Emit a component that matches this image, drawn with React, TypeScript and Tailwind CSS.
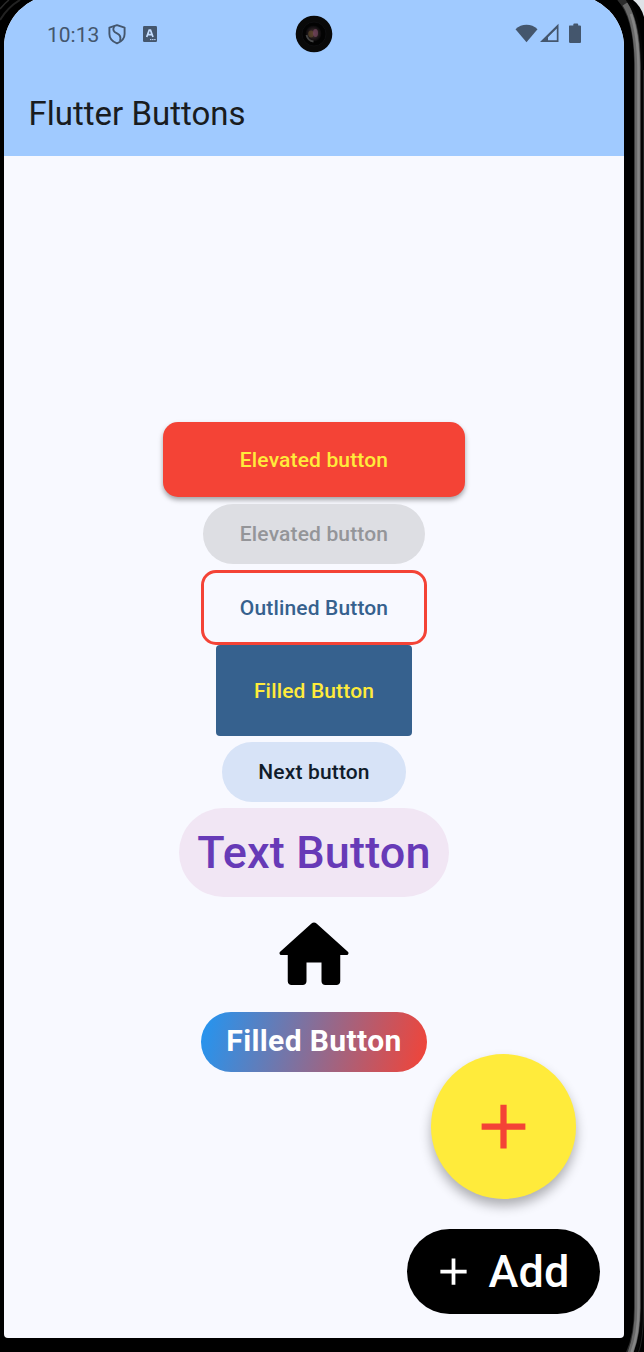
import React from "react";
import { MdAdd } from "react-icons/md";

function ShieldIcon() {
  return (
    <svg width="18" height="21" viewBox="0 0 18 21" fill="none" stroke="#44566d" strokeWidth="1.9" strokeLinejoin="round">
      <path d="M9 1.2 L16.6 3.6 V10 C16.6 14 13.5 17.6 9 19.4 C4.500 17.600 1.400 14 1.400 10 V3.600 Z" />
      <path d="M6.300 2.200 C4.400 6 5.500 7.800 9 9.400 C12.500 11 13.300 13 12 17" />
    </svg>
  );
}

function KeyboardIcon() {
  return (
    <svg width="14" height="16" viewBox="0 0 14 16">
      <rect width="14" height="16" rx="1.2" fill="#44566d" />
      <path d="M3.700 11 L6.200 4.200 H7.500 L10 11 M4.800 8.700 H8.900" fill="none" stroke="#c3dcfd" strokeWidth="1.700" />
      <path d="M7 13.600 H13" stroke="#c3dcfd" strokeWidth="1" strokeDasharray="1.400 .7" />
    </svg>
  );
}

function StatusIcons() {
  return (
    <svg width="68" height="22" viewBox="0 0 68 22" fill="#44566d">
      <path d="M0.500 6.200 C6.500 .300 16.500 .300 22.500 6.200 L11.500 19.300 Z" />
      <path fillRule="evenodd" d="M25 19 L43.500 .800 V19 Z M33 17.300 H41.800 V5.500 L33 14.200 Z" />
      <path d="M54.500 2.500 H58.300 V1.600 Q58.300 .500 59.300 .500 H62.200 Q63.200 .500 63.200 1.600 V2.500 H65 Q66 2.500 66 3.500 V18.700 Q66 19.900 65 19.900 H55.200 Q54 19.900 54 18.700 V3.500 Q54 2.500 54.500 2.500 Z" />
    </svg>
  );
}

function HomeIcon() {
  return (
    <svg width="90" height="90" viewBox="0 0 24 24">
      <path d="M10 19v-5h4v5c0 .55.45 1 1 1h3c.55 0 1-.45 1-1v-7h1.700c.46 0 .68-.57.33-.87L12.670 3.600c-.38-.34-.96-.34-1.340 0l-8.360 7.530c-.34.300-.13.870.33.870H5v7c0 .55.45 1 1 1h3c.55 0 1-.45 1-1z" />
    </svg>
  );
}

function Camera() {
  return (
    <svg className="absolute left-[291px] top-[20px]" width="38" height="38" viewBox="0 0 38 38">
      <defs>
        <radialGradient id="lens">
          <stop offset="0" stopColor="#54343b" />
          <stop offset=".5" stopColor="#2b2022" />
          <stop offset="1" stopColor="#070708" />
        </radialGradient>
      </defs>
      <circle cx="19" cy="19" r="18.300" fill="#090909" />
      <circle cx="19" cy="19" r="12" fill="#030303" stroke="#0e0e10" />
      <circle cx="18.500" cy="18.500" r="8" fill="url(#lens)" />
      <path d="M11.500 20 Q13 26 18.500 26.500" fill="none" stroke="#444" strokeWidth="1.800" />
      <ellipse cx="16" cy="19" rx="2.800" ry="3.500" fill="#65502b" opacity=".6" />
      <ellipse cx="20.500" cy="18" rx="2.500" ry="4" fill="#75465f" opacity=".7" />
    </svg>
  );
}

function DeviceEdge() {
  return (
    <svg className="pointer-events-none absolute left-0 top-0" width="644" height="1352" viewBox="0 0 644 1352" fill="none">
      <path d="M0 9 Q5 3 9 0" stroke="#292929" strokeWidth="1.500" />
      <path d="M0 20 Q8 7 20 0" stroke="#222" strokeWidth="2" />
      <path d="M620 -2 Q636.500 16 637.500 60 V1308 Q637.500 1336 629 1354" stroke="#2c2c2c" strokeWidth="7" />
      <path d="M625 4 Q636.500 22 637.500 64 V1308 Q637.500 1335 630 1354" stroke="#686868" strokeWidth="5.500" />
      <path d="M631 14 Q638 34 638.500 68 V1308 Q638.500 1335 631 1354" stroke="#858585" strokeWidth="2.500" />
      <path d="M627 0 Q642 18 642 66 V1312 Q642 1338 635 1354" stroke="#050505" strokeWidth="2" />
      <path d="M643.500 70 V1310 Q643.500 1340 638 1354" stroke="#202222" strokeWidth="1" />
      <path d="M633 0 Q641 6 644 17 V0 Z" fill="#dfe3e8" />
    </svg>
  );
}

const label = "flex items-center justify-center pt-[2px] text-[21px] font-medium tracking-[0.15px]";

export default function App() {
  return (
    <div className="relative h-[1352px] w-[644px] overflow-hidden bg-black pl-1 font-['Roboto',sans-serif]">
      <div className="relative -mt-[5px] flex h-[1343px] w-[620px] flex-col overflow-hidden rounded-t-[52px] rounded-b-[4px] bg-[#f8f9ff]">
        <header className="h-[161px] shrink-0 bg-[#a0caff] pt-[5px]">
          <div className="flex h-[68px] items-center justify-between pl-[43px] pr-[41px]">
            <div className="flex items-center">
              <span className="w-[61px] pt-[2px] text-[21px] leading-none text-[#44566d]">10:13</span>
              <ShieldIcon />
              <div className="ml-[17px]">
                <KeyboardIcon />
              </div>
            </div>
            <StatusIcons />
          </div>
          <h1 className="flex h-[88px] items-center pl-[24.500px] pt-[4px] text-[33px] text-[#191c20]">Flutter Buttons</h1>
        </header>
        <Camera />

        <main className="flex flex-col items-center pt-[266px]">
          <button className={`${label} h-[75px] w-[302px] rounded-[15px] bg-[#f44336] text-[#ffeb3b] shadow-[0_3px_5px_rgba(0,0,0,0.35)]`}>
            Elevated button
          </button>
          <button disabled className={`${label} mt-[7px] h-[60px] w-[222px] rounded-full bg-[#dddee3] text-[#949599]`}>
            Elevated button
          </button>
          <button className={`${label} mt-[6px] h-[75px] w-[226px] rounded-[15px] border-[3px] border-[#f44336] text-[#36618e]`}>
            Outlined Button
          </button>
          <button className={`${label} h-[91px] w-[196px] rounded-[4px] bg-[#36618e] text-[#ffeb3b]`}>
            Filled Button
          </button>
          <button className={`${label} mt-[6px] h-[60px] w-[184px] rounded-full bg-[#d7e3f7] text-[#101c2b]`}>
            Next button
          </button>
          <button className="mt-[6px] flex h-[89px] w-[270px] items-center justify-center rounded-full bg-[#f1e6f4] text-[45px] font-medium tracking-[0.15px] text-[#673ab7]">
            Text Button
          </button>
          <button className="mt-[13px]" aria-label="Home">
            <HomeIcon />
          </button>
          <button className="mt-[12px] flex h-[60px] w-[226px] items-center justify-center rounded-full bg-[linear-gradient(105deg,#2196f3,#f44336)] pb-[3px] text-[30px] font-bold tracking-[0.38px] text-white">
            Filled Button
          </button>
        </main>

        <div className="absolute bottom-[24px] right-[24px] flex flex-col items-end gap-[30px]">
          <button className="mr-[24px] flex size-[145px] items-center justify-center rounded-full bg-[#ffeb3b] text-[#f44336] shadow-[0_7px_12px_rgba(0,0,0,0.3)]">
            <MdAdd size={75} />
          </button>
          <button className="flex h-[85px] w-[193px] items-center rounded-full bg-black pl-[24px] text-[45px] font-medium tracking-[0.15px] text-white">
            <MdAdd size={45} />
            <span className="ml-[12.500px] pt-px">Add</span>
          </button>
        </div>
      </div>
      <DeviceEdge />
    </div>
  );
}
